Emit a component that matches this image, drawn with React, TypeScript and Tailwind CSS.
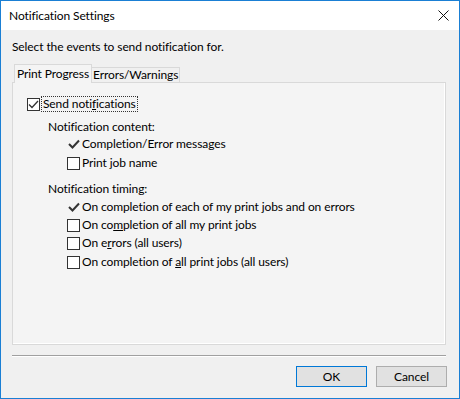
import React from 'react';

const font = { fontFamily: 'Lato, "Noto Sans", sans-serif' };

function CheckGlyph() {
  return (
    <svg width="12" height="10" viewBox="0 0 12 10" className="shrink-0">
      <path d="M1 5 L4.5 8.5 L11 1.5" fill="none" stroke="#333" strokeWidth="2" />
    </svg>
  );
}

function Box({ checked = false }: { checked?: boolean }) {
  return (
    <span className="flex h-[13px] w-[13px] shrink-0 items-center justify-center border border-[#333] bg-white">
      {checked && (
        <svg width="11" height="9" viewBox="0 0 11 9">
          <path d="M1 4.5 L4 7.5 L10 1" fill="none" stroke="#333" strokeWidth="1.3" />
        </svg>
      )}
    </span>
  );
}

function Row({ children, mark, mt }: { children: React.ReactNode; mark: 'check' | 'box'; mt: string }) {
  return (
    <div className={`flex h-4 items-center gap-[2px] pl-[54px] ${mt}`}>
      {mark === 'check' ? (
        <span className="flex w-[13px] justify-center">
          <CheckGlyph />
        </span>
      ) : (
        <Box />
      )}
      <span className="leading-4">{children}</span>
    </div>
  );
}

export default function App() {
  return (
    <div
      className="flex h-[399px] w-[460px] flex-col border border-[#1a7fd4] bg-[#f0f0f0] text-[12px] tracking-[-0.1px] text-black"
      style={font}
    >
      {/* title bar */}
      <div className="flex h-[29px] shrink-0 items-center justify-between bg-white pl-2 pr-[10px]">
        <span className="text-[12px]">Notification Settings</span>
        <svg width="11" height="11" viewBox="0 0 11 11">
          <path d="M0.5 0.5 L10.5 10.5 M10.5 0.5 L0.5 10.5" stroke="#111" strokeWidth="1" />
        </svg>
      </div>

      <div className="flex flex-1 flex-col px-[11px]">
        <p className="mt-[9px] h-4 leading-4">Select the events to send notification for.</p>

        {/* tabs */}
        <div className="mt-[9px] flex h-[18px] items-end pl-[2px]">
          <div className="relative z-10 -mb-px flex h-[19px] items-center whitespace-nowrap border border-b-0 border-[#d9d9d9] bg-[#f4f4f4] px-[2px]">
            Print Progress
          </div>
          <div className="flex h-[15px] items-center whitespace-nowrap border border-b-0 border-l-0 border-[#d9d9d9] bg-[#f0f0f0] px-px">
            Errors/Warnings
          </div>
        </div>

        {/* panel */}
        <div className="h-[263px] w-[434px] border border-[#d9d9d9] bg-[#f4f4f4] shadow-[inset_-1px_-1px_0_#ffffff]">
          <div className="mt-[13px] flex h-4 items-center pl-[14px]">
            <Box checked />
            <span className="ml-px border border-dotted border-[#333] px-px leading-[14px]">
              Send noti<u>f</u>ications
            </span>
          </div>

          <p className="mt-[7px] h-4 pl-[35px] leading-4">Notification content:</p>
          <Row mark="check" mt="mt-px">
            Completion/Error messages
          </Row>
          <Row mark="box" mt="mt-[3px]">
            Print <u>j</u>ob name
          </Row>

          <p className="mt-[10px] h-4 pl-[35px] leading-4">Notification timing:</p>
          <Row mark="check" mt="mt-[2px]">
            On completion of each of my print jobs and on errors
          </Row>
          <Row mark="box" mt="mt-[2px]">
            On co<u>m</u>pletion of all my print jobs
          </Row>
          <Row mark="box" mt="mt-[2px]">
            On e<u>r</u>rors (all users)
          </Row>
          <Row mark="box" mt="mt-[3px]">
            On completion of <u>a</u>ll print jobs (all users)
          </Row>
        </div>

        {/* separator */}
        <div className="mt-[10px] h-[2px] w-[434px] border-t border-[#a0a0a0] bg-white" />

        {/* buttons */}
        <div className="mt-[9px] flex justify-end gap-[9px] pr-px">
          <button className="flex h-[21px] w-[71px] items-center justify-center border border-[#0078d7] bg-[#e1e1e1]">
            OK
          </button>
          <button className="flex h-[21px] w-[71px] items-center justify-center border border-[#adadad] bg-[#e1e1e1]">
            Cancel
          </button>
        </div>
      </div>
    </div>
  );
}
